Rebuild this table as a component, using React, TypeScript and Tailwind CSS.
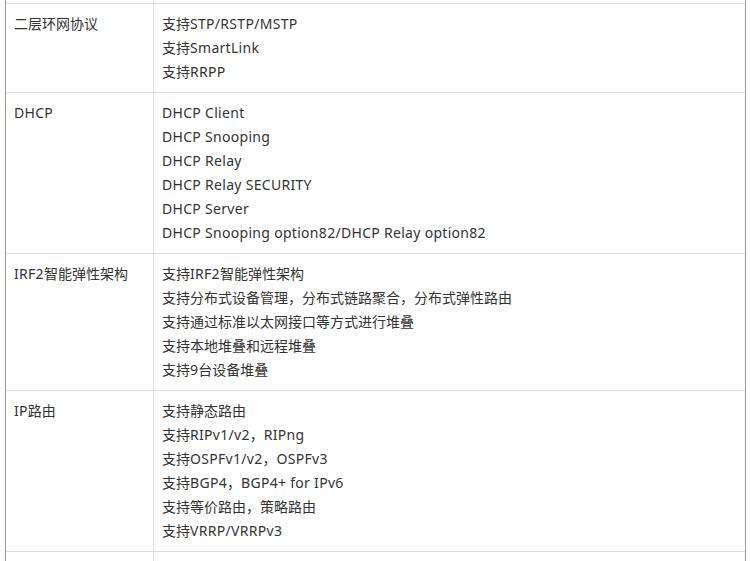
import React from "react";

const rows: { label: string; items: string[] }[] = [
  { label: "二层环网协议", items: ["支持STP/RSTP/MSTP", "支持SmartLink", "支持RRPP"] },
  {
    label: "DHCP",
    items: [
      "DHCP Client",
      "DHCP Snooping",
      "DHCP Relay",
      "DHCP Relay SECURITY",
      "DHCP Server",
      "DHCP Snooping option82/DHCP Relay option82",
    ],
  },
  {
    label: "IRF2智能弹性架构",
    items: [
      "支持IRF2智能弹性架构",
      "支持分布式设备管理，分布式链路聚合，分布式弹性路由",
      "支持通过标准以太网接口等方式进行堆叠",
      "支持本地堆叠和远程堆叠",
      "支持9台设备堆叠",
    ],
  },
  {
    label: "IP路由",
    items: [
      "支持静态路由",
      "支持RIPv1/v2，RIPng",
      "支持OSPFv1/v2，OSPFv3",
      "支持BGP4，BGP4+ for IPv6",
      "支持等价路由，策略路由",
      "支持VRRP/VRRPv3",
    ],
  },
];

function Txt({ t }: { t: string }) {
  const parts = t.split(/([\u3000-\u303f\u4e00-\u9fff\uff00-\uffef]+)/).filter(Boolean);
  return (
    <>
      {parts.map((p, i) =>
        /[\u3000-\u303f\u4e00-\u9fff\uff00-\uffef]/.test(p) ? (
          <span key={i}>{p}</span>
        ) : (
          <span key={i} className="tracking-[0.3px]">
            {p}
          </span>
        )
      )}
    </>
  );
}

export default function App() {
  return (
    <div
      className="h-[561px] w-[750px] overflow-hidden bg-white text-[14px] leading-[24px] text-[#333]"
      style={{ fontFamily: '"Noto Sans", "Noto Sans CJK SC", sans-serif' }}
    >
      <div className="ml-[5px] w-[741px] border-x border-[#999]">
        <div className="flex h-[4px] border-b border-[#ddd]">
          <div className="w-[148px] border-r border-[#ddd]" />
          <div className="flex-1" />
        </div>
        {rows.map((r) => (
          <div key={r.label} className="flex border-b border-[#ddd]">
            <div className="w-[148px] shrink-0 border-r border-[#ddd] pl-[8px] pt-[8px] pb-[8px]">
              <Txt t={r.label} />
            </div>
            <div className="flex-1 pl-[8px] pt-[8px] pb-[8px]">
              {r.items.map((t) => (
                <div key={t}>
                  <Txt t={t} />
                </div>
              ))}
            </div>
          </div>
        ))}
        <div className="flex h-[40px]">
          <div className="w-[148px] border-r border-[#ddd]" />
          <div className="flex-1" />
        </div>
      </div>
    </div>
  );
}
